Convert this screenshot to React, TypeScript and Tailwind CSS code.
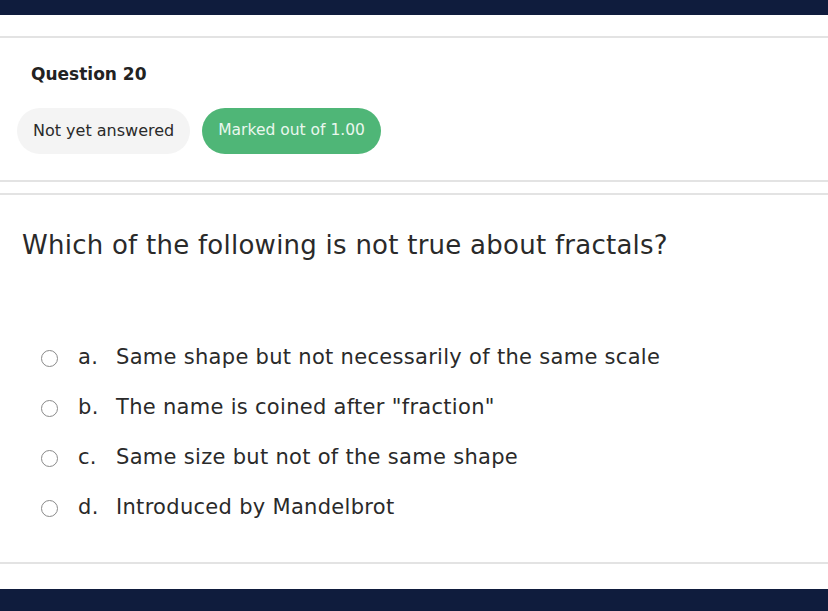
import React from "react";

const options = [
  { l: "a.", t: "Same shape but not necessarily of the same scale" },
  { l: "b.", t: 'The name is coined after "fraction"' },
  { l: "c.", t: "Same size but not of the same shape" },
  { l: "d.", t: "Introduced by Mandelbrot" },
];

export default function App() {
  return (
    <div
      className="w-[828px] h-[611px] bg-white flex flex-col overflow-hidden text-[#2b2b2b]"
      style={{ fontFamily: "'DejaVu Sans', 'Noto Sans', sans-serif" }}
    >
      <div className="h-[15px] bg-[#0f1c3d] shrink-0" />
      <div className="h-[21px] shrink-0" />
      <div className="border-t-2 border-b-2 border-[#e3e3e3] h-[146px] shrink-0 px-[31px] pt-[24px]">
        <div className="text-[17px] font-bold text-[#222] leading-[24px]">Question 20</div>
        <div className="flex gap-[12px] mt-[22px] -ml-[14px]">
          <div className="h-[46px] px-[16px] rounded-full bg-[#f4f4f4] flex items-center text-[16px] text-[#2a2a2a]">
            Not yet answered
          </div>
          <div className="h-[46px] px-[16px] rounded-full bg-[#4fb677] flex items-center text-[15.5px] text-[#eaf7ee]">
            Marked out of 1.00
          </div>
        </div>
      </div>
      <div className="h-[11px] shrink-0" />
      <div className="border-t-2 border-b-2 border-[#e3e3e3] h-[371px] shrink-0 flex flex-col">
        <div className="pl-[22px] pt-[33px] text-[26px] leading-[34px] tracking-[0.25px] text-[#2a2a2a]">
          Which of the following is not true about fractals?
        </div>
        <div className="flex flex-col gap-[20px] pl-[41px] mt-[81px]">
          {options.map((o) => (
            <div key={o.l} className="flex items-center h-[30px] text-[21px] tracking-[0.3px] text-[#2a2a2a]">
              <span className="w-[17px] h-[17px] rounded-full border-[1.5px] border-[#8a8a8a] shrink-0" />
              <span className="ml-[20px] w-[38px]">{o.l}</span>
              <span>{o.t}</span>
            </div>
          ))}
        </div>
      </div>
      <div className="flex-1" />
      <div className="h-[22px] bg-[#0f1c3d] shrink-0" />
    </div>
  );
}
